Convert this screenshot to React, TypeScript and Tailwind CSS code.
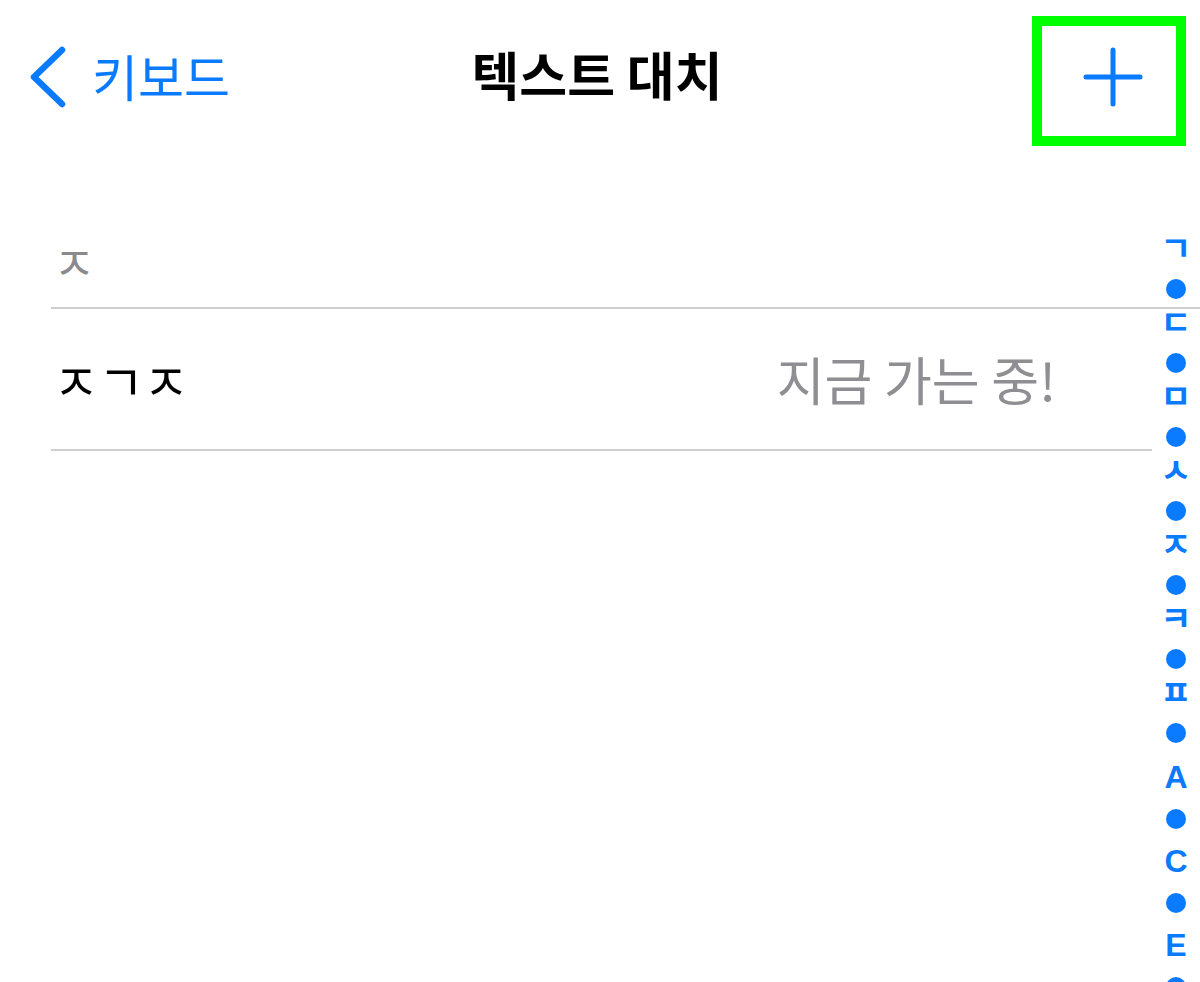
import React from "react";

const font = { fontFamily: '"Noto Sans CJK KR", "Noto Sans", sans-serif' };
const latin = { fontFamily: '"Liberation Sans", Arial, sans-serif' };

type IndexItem = { label: string; kind: "jamo" | "latin" | "dot"; tall?: boolean; first?: boolean };

const indexItems: IndexItem[] = [
  { label: "ㄱ", kind: "jamo" },
  { label: "", kind: "dot" },
  { label: "ㄷ", kind: "jamo" },
  { label: "", kind: "dot" },
  { label: "ㅁ", kind: "jamo" },
  { label: "", kind: "dot" },
  { label: "ㅅ", kind: "jamo" },
  { label: "", kind: "dot" },
  { label: "ㅈ", kind: "jamo" },
  { label: "", kind: "dot" },
  { label: "ㅋ", kind: "jamo" },
  { label: "", kind: "dot" },
  { label: "ㅍ", kind: "jamo" },
  { label: "", kind: "dot" },
  { label: "A", kind: "latin", first: true },
  { label: "", kind: "dot", tall: true },
  { label: "C", kind: "latin" },
  { label: "", kind: "dot", tall: true },
  { label: "E", kind: "latin" },
  { label: "", kind: "dot", tall: true },
];

function IndexEntry({ item }: { item: IndexItem }) {
  if (item.kind === "dot") {
    return (
      <div className={`flex items-center justify-center ${item.tall ? "h-[40px]" : "h-[37px]"}`}>
        <div className="h-[20px] w-[20px] rounded-full bg-[#0a7aff]" />
      </div>
    );
  }
  if (item.kind === "latin") {
    return (
      <div
        className={`flex h-[44px] items-center justify-center text-[32px] font-bold leading-none text-[#0a7aff] ${item.first ? "mt-[4px]" : ""}`}
        style={latin}
      >
        {item.label}
      </div>
    );
  }
  return (
    <div className="flex h-[37px] items-center justify-center">
      <span className="-translate-y-[5px] text-[34px] font-semibold leading-none text-[#0a7aff]">{item.label}</span>
    </div>
  );
}

export default function App() {
  return (
    <div className="relative h-[982px] w-[1200px] overflow-hidden bg-white" style={font}>
      {/* Nav bar */}
      <div className="relative flex h-[155px] items-start">
        <div className="flex flex-1 items-center pl-[28px] pt-[46px]">
          <svg width="42" height="62" viewBox="0 0 42 62" className="text-[#0a7aff]">
            <path d="M34 4 L6 31 L34 58" fill="none" stroke="currentColor" strokeWidth="6.5" strokeLinecap="round" strokeLinejoin="round" />
          </svg>
          <span className="-mt-[4px] ml-[22px] text-[50px] leading-none text-[#0a7aff]">키보드</span>
        </div>
        <h1 className="pr-[20px] pt-[48px] text-[52px] font-bold leading-none text-black">텍스트 대치</h1>
        <div className="flex flex-1 justify-end pr-[14px] pt-[16px]">
          <div className="flex h-[130px] w-[154px] items-center justify-center border-[10px] border-[#00ff00]">
            <svg width="60" height="60" viewBox="0 0 60 60" className="-mt-[8px] ml-[8px] text-[#0a7aff]">
              <path d="M30 3 V57 M3 30 H57" fill="none" stroke="currentColor" strokeWidth="5" strokeLinecap="round" />
            </svg>
          </div>
        </div>
      </div>

      {/* List */}
      <div className="pl-[51px]">
        <div className="flex h-[154px] items-end border-b-2 border-[#cfcfd2] pb-[24px] pl-[2px]">
          <span className="text-[46px] leading-none text-[#8a8a8e]">ㅈ</span>
        </div>
        <div className="mr-[48px] flex h-[142px] items-center justify-between border-b-2 border-[#cfcfd2] pl-[2px] pr-[96px]">
          <span className="text-[50px] leading-none tracking-[-1px] text-black">ㅈㄱㅈ</span>
          <span className="text-[52px] leading-none text-[#8e8e93]">지금 가는 중!</span>
        </div>
      </div>

      {/* Section index */}
      <div className="absolute right-0 top-[233px] flex w-[48px] flex-col items-center">
        {indexItems.map((item, i) => (
          <IndexEntry key={i} item={item} />
        ))}
      </div>
    </div>
  );
}
